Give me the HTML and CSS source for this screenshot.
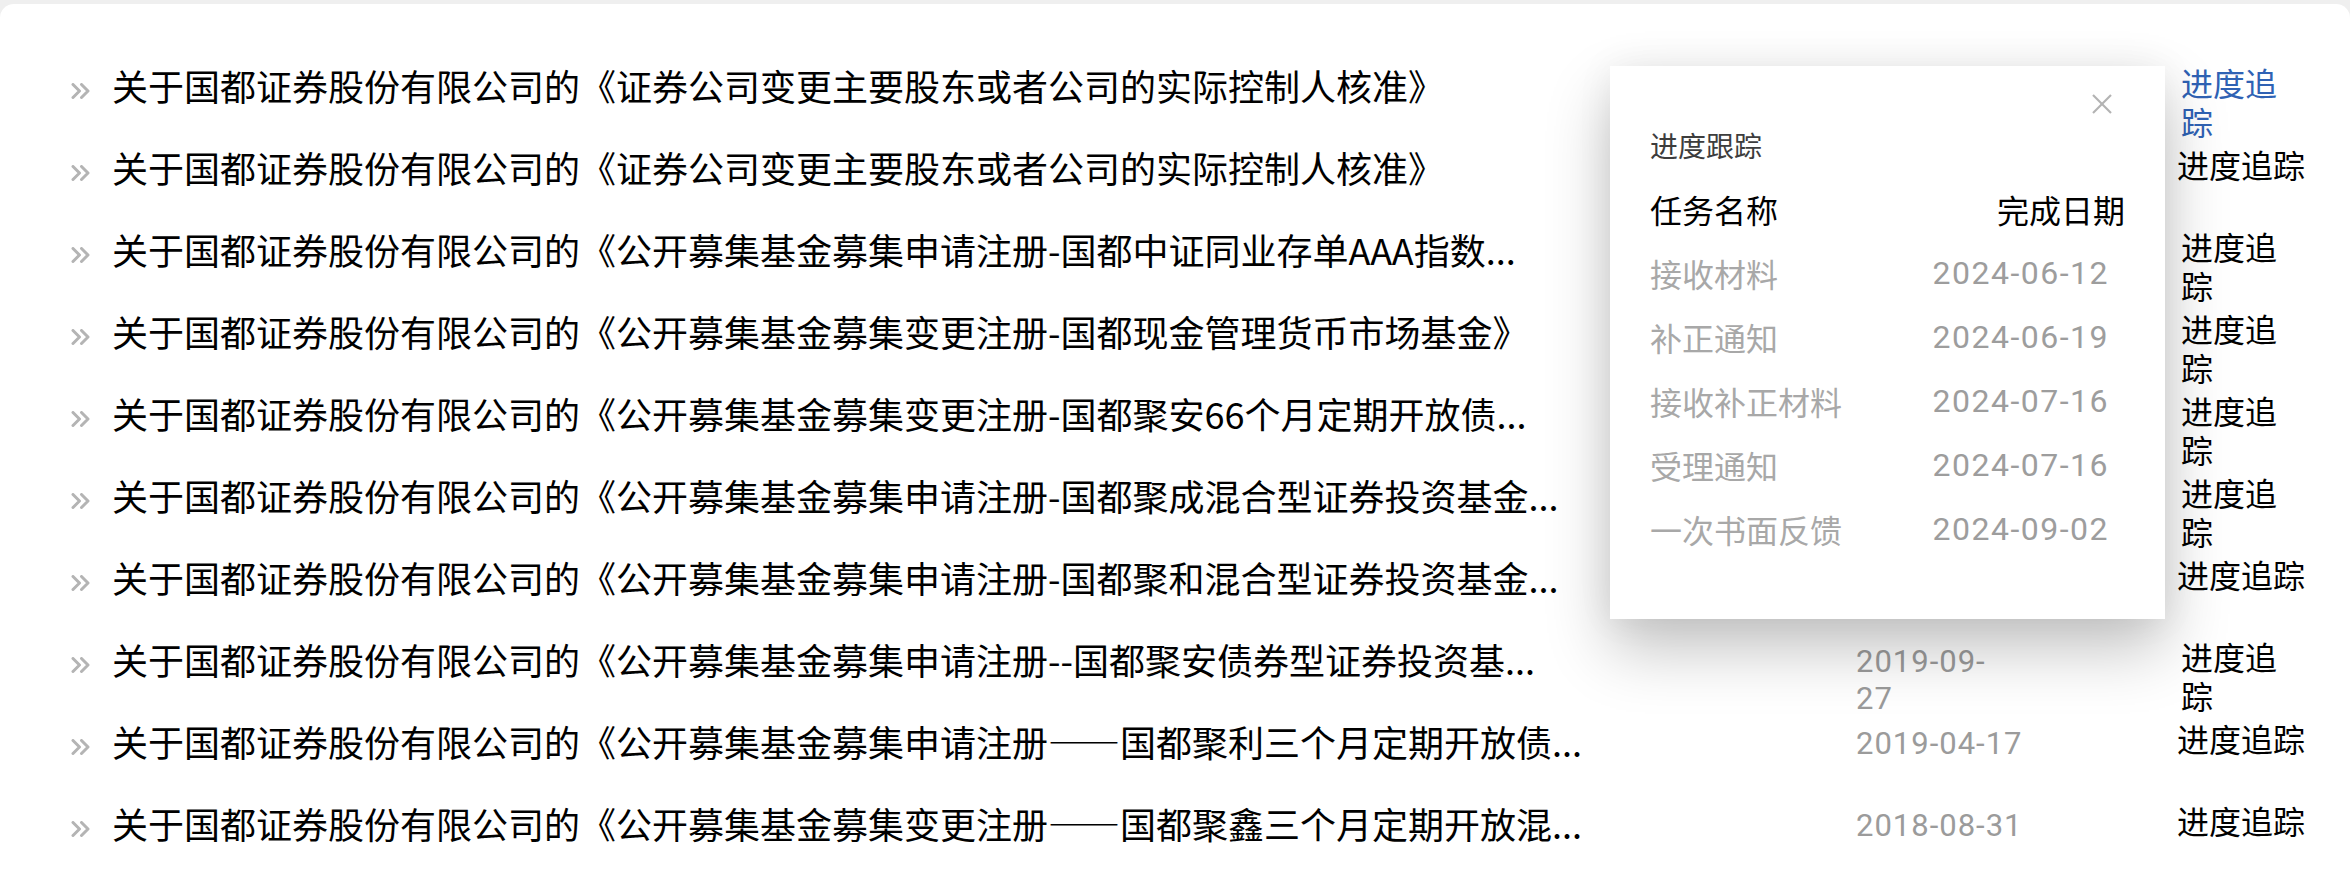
FILE: index.html
```html
<!DOCTYPE html>
<html lang="zh-CN">
<head>
<meta charset="utf-8">
<title>进度追踪</title>
<link rel="stylesheet" href="styles.css">
</head>
<body>
<div class="card">
  <ul class="list">
    <li class="row">
      <svg class="bullet" viewBox="0 0 20 16"><polyline points="2,1.5 8.5,8 2,14.5"/><polyline points="10.5,1.5 17,8 10.5,14.5"/></svg>
      <span class="title">关于国都证券股份有限公司的《证券公司变更主要股东或者公司的实际控制人核准》</span>
      <span class="date"></span>
      <a class="track track-wrap active">进度追踪</a>
    </li>
    <li class="row">
      <svg class="bullet" viewBox="0 0 20 16"><polyline points="2,1.5 8.5,8 2,14.5"/><polyline points="10.5,1.5 17,8 10.5,14.5"/></svg>
      <span class="title">关于国都证券股份有限公司的《证券公司变更主要股东或者公司的实际控制人核准》</span>
      <span class="date"></span>
      <a class="track">进度追踪</a>
    </li>
    <li class="row">
      <svg class="bullet" viewBox="0 0 20 16"><polyline points="2,1.5 8.5,8 2,14.5"/><polyline points="10.5,1.5 17,8 10.5,14.5"/></svg>
      <span class="title">关于国都证券股份有限公司的《公开募集基金募集申请注册-国都中证同业存单AAA指数...</span>
      <span class="date"></span>
      <a class="track track-wrap">进度追踪</a>
    </li>
    <li class="row">
      <svg class="bullet" viewBox="0 0 20 16"><polyline points="2,1.5 8.5,8 2,14.5"/><polyline points="10.5,1.5 17,8 10.5,14.5"/></svg>
      <span class="title">关于国都证券股份有限公司的《公开募集基金募集变更注册-国都现金管理货币市场基金》</span>
      <span class="date"></span>
      <a class="track track-wrap">进度追踪</a>
    </li>
    <li class="row">
      <svg class="bullet" viewBox="0 0 20 16"><polyline points="2,1.5 8.5,8 2,14.5"/><polyline points="10.5,1.5 17,8 10.5,14.5"/></svg>
      <span class="title">关于国都证券股份有限公司的《公开募集基金募集变更注册-国都聚安66个月定期开放债...</span>
      <span class="date"></span>
      <a class="track track-wrap">进度追踪</a>
    </li>
    <li class="row">
      <svg class="bullet" viewBox="0 0 20 16"><polyline points="2,1.5 8.5,8 2,14.5"/><polyline points="10.5,1.5 17,8 10.5,14.5"/></svg>
      <span class="title">关于国都证券股份有限公司的《公开募集基金募集申请注册-国都聚成混合型证券投资基金...</span>
      <span class="date"></span>
      <a class="track track-wrap">进度追踪</a>
    </li>
    <li class="row">
      <svg class="bullet" viewBox="0 0 20 16"><polyline points="2,1.5 8.5,8 2,14.5"/><polyline points="10.5,1.5 17,8 10.5,14.5"/></svg>
      <span class="title">关于国都证券股份有限公司的《公开募集基金募集申请注册-国都聚和混合型证券投资基金...</span>
      <span class="date"></span>
      <a class="track">进度追踪</a>
    </li>
    <li class="row">
      <svg class="bullet" viewBox="0 0 20 16"><polyline points="2,1.5 8.5,8 2,14.5"/><polyline points="10.5,1.5 17,8 10.5,14.5"/></svg>
      <span class="title">关于国都证券股份有限公司的《公开募集基金募集申请注册--国都聚安债券型证券投资基...</span>
      <span class="date">2019-09-<br>27</span>
      <a class="track track-wrap">进度追踪</a>
    </li>
    <li class="row">
      <svg class="bullet" viewBox="0 0 20 16"><polyline points="2,1.5 8.5,8 2,14.5"/><polyline points="10.5,1.5 17,8 10.5,14.5"/></svg>
      <span class="title">关于国都证券股份有限公司的《公开募集基金募集申请注册——国都聚利三个月定期开放债...</span>
      <span class="date">2019-04-17</span>
      <a class="track">进度追踪</a>
    </li>
    <li class="row">
      <svg class="bullet" viewBox="0 0 20 16"><polyline points="2,1.5 8.5,8 2,14.5"/><polyline points="10.5,1.5 17,8 10.5,14.5"/></svg>
      <span class="title">关于国都证券股份有限公司的《公开募集基金募集变更注册——国都聚鑫三个月定期开放混...</span>
      <span class="date">2018-08-31</span>
      <a class="track">进度追踪</a>
    </li>
  </ul>

  <div class="popover">
    <div class="pop-head">
      <span class="pop-close"><svg viewBox="0 0 22 22"><line x1="2" y1="2" x2="20" y2="20"/><line x1="20" y1="2" x2="2" y2="20"/></svg></span>
    </div>
    <div class="pop-title">进度跟踪</div>
    <div class="pop-table">
      <div class="pop-th">任务名称</div>
      <div class="pop-th pop-th-date">完成日期</div>
      <div class="pop-td">接收材料</div>
      <div class="pop-td pop-date">2024-06-12</div>
      <div class="pop-td">补正通知</div>
      <div class="pop-td pop-date">2024-06-19</div>
      <div class="pop-td">接收补正材料</div>
      <div class="pop-td pop-date">2024-07-16</div>
      <div class="pop-td">受理通知</div>
      <div class="pop-td pop-date">2024-07-16</div>
      <div class="pop-td">一次书面反馈</div>
      <div class="pop-td pop-date">2024-09-02</div>
    </div>
  </div>
</div>
</body>
</html>
```
FILE: styles.css
```css
html, body {
  margin: 0;
  padding: 0;
}
body {
  background: #efefef;
  overflow: hidden;
  font-family: "Noto Sans CJK SC", "Roboto", sans-serif;
  color: #000;
}
.card {
  position: relative;
  margin-top: 4px;
  height: 872px;
  box-sizing: border-box;
  padding-top: 40px;
  background: #fff;
  border-radius: 14px 14px 0 0;
}
.list {
  margin: 0;
  padding: 0;
  list-style: none;
}
.row {
  display: flex;
  align-items: baseline;
  height: 82px;
}
.bullet {
  flex: 0 0 20px;
  width: 20px;
  height: 16px;
  margin: 11px 21px 0 71px;
  align-self: center;
  fill: none;
  stroke: #b4b4b4;
  stroke-width: 3;
  stroke-linecap: round;
  stroke-linejoin: round;
}
.title {
  flex: 0 0 1744px;
  font-size: 36px;
  line-height: 82px;
  white-space: nowrap;
  overflow: hidden;
  color: #000;
}
.date {
  flex: 0 0 321px;
  align-self: flex-start;
  padding-top: 25px;
  font-family: "Roboto", "Noto Sans CJK SC", sans-serif;
  font-size: 31px;
  line-height: 37px;
  color: #9b9b9b;
  letter-spacing: 1px;
}
.track {
  align-self: flex-start;
  padding-top: 19px;
  font-size: 32px;
  line-height: 39px;
  color: #000;
  cursor: pointer;
}
.track-wrap {
  width: 100px;
  padding-left: 4px;
}
.track.active {
  color: #2f62b4;
}

.popover {
  position: absolute;
  left: 1610px;
  top: 62px;
  width: 555px;
  height: 553px;
  box-sizing: border-box;
  padding: 27px 40px 0;
  background: #fff;
  box-shadow: 0 30px 60px rgba(0, 0, 0, 0.24), 0 0 36px rgba(0, 0, 0, 0.06);
}
.pop-head {
  display: flex;
  justify-content: flex-end;
  height: 22px;
  padding-right: 12px;
}
.pop-close {
  display: block;
  width: 22px;
  height: 22px;
}
.pop-close svg {
  display: block;
  width: 22px;
  height: 22px;
  stroke: #b3b3b3;
  stroke-width: 2.2;
}
.pop-title {
  margin-top: 10px;
  font-size: 28px;
  line-height: 40px;
  color: #3d3d3d;
}
.pop-table {
  margin-top: 12px;
  display: grid;
  grid-template-columns: 1fr auto;
  grid-auto-rows: 64px;
  align-items: center;
}
.pop-th {
  font-size: 32px;
  line-height: 40px;
  color: #000;
}
.pop-th-date {
  text-align: right;
}
.pop-td {
  font-size: 32px;
  line-height: 40px;
  color: #a8a8a8;
}
.pop-date {
  padding-right: 16px;
  text-align: right;
  font-family: "Roboto", "Noto Sans CJK SC", sans-serif;
  color: #9d9d9d;
  letter-spacing: 1.5px;
}
```
